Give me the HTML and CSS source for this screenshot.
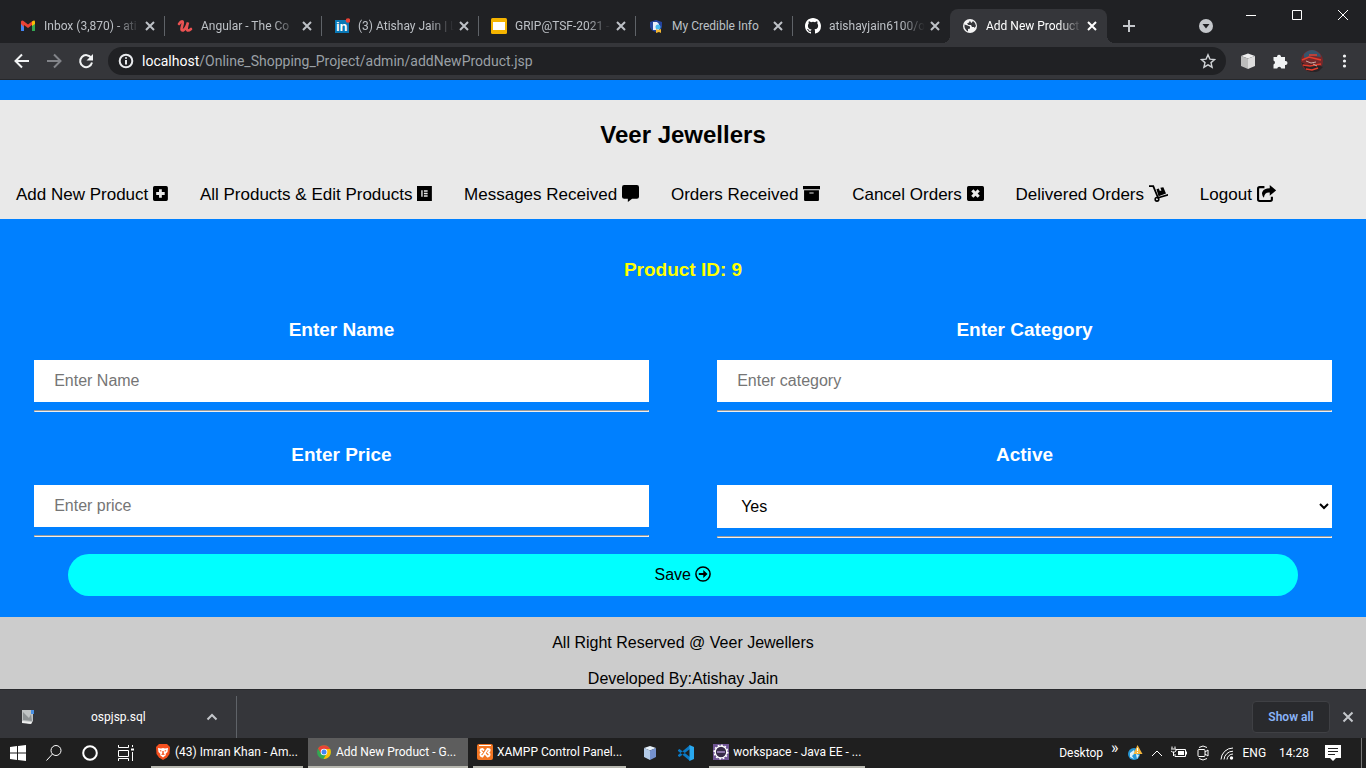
FILE: index.html
```html
<!DOCTYPE html>
<html lang="en">
<head>
<meta charset="utf-8">
<title>Add New Product</title>
<link rel="stylesheet" href="styles.css">
</head>
<body>
<div class="screen">
  <div class="tabstrip">
    <div class="tab">
      <svg class="icon" viewBox="0 0 16 16"><path fill="#4285f4" d="M1 4v8.500q0 .5.500.5H4V6z"/><path fill="#34a853" d="M15 4v8.500q0 .5-.5.500H12V6z"/><path fill="#ea4335" d="M1 4.500V3.500Q2 2 3.500 3L8 6.500 12.500 3v3.500L8 10 4 7v2L1 6z"/><path fill="#fbbc04" d="M12 3.500Q15 1.500 15 4v2l-3 2z"/></svg>
      <span class="title fade">Inbox (3,870) - ati</span>
      <button class="close" aria-label="Close tab"><svg viewBox="0 0 16 16"><path d="M4 4l8 8M12 4l-8 8"/></svg></button>
    </div>
    <div class="tab">
      <svg class="icon" viewBox="0 0 16 16"><path fill="none" stroke="#eb5252" stroke-width="2.600" stroke-linecap="round" d="M2 6Q4 3 5.500 3.500 6.500 4 5 8.500 3.500 13 6 12.500 9 11 11 4.500 9 11.500 10.500 12.500 12 12.800 14 11"/></svg>
      <span class="title fade">Angular - The Co</span>
      <button class="close" aria-label="Close tab"><svg viewBox="0 0 16 16"><path d="M4 4l8 8M12 4l-8 8"/></svg></button>
    </div>
    <div class="tab">
      <svg class="icon" viewBox="0 0 16 16"><path fill="#0a77b5" d="M1 2h14v13H1z"/><text x="2" y="13" class="in">in</text><circle cx="14" cy="2.500" r="2.300" fill="#e94235"/></svg>
      <span class="title fade">(3) Atishay Jain | L</span>
      <button class="close" aria-label="Close tab"><svg viewBox="0 0 16 16"><path d="M4 4l8 8M12 4l-8 8"/></svg></button>
    </div>
    <div class="tab">
      <svg class="icon" viewBox="0 0 16 16"><rect width="16" height="16" rx="1.500" fill="#f5b400"/><path fill="#fff" d="M2 4h12v8H2z"/></svg>
      <span class="title fade">GRIP@TSF-2021 -</span>
      <button class="close" aria-label="Close tab"><svg viewBox="0 0 16 16"><path d="M4 4l8 8M12 4l-8 8"/></svg></button>
    </div>
    <div class="tab">
      <svg class="icon" viewBox="0 0 16 16"><path fill="#24439c" d="M8 2l6 2v5q-1 4-6 5-5-1-6-5V4z"/><path fill="#e8eefb" d="M5 4h4l2 2v6H5z"/><circle cx="10" cy="9" r="2.500" fill="#49b8ef"/><path fill="#f2b632" d="M8 11l2 1 3-1v4l-2-1-3 1z"/></svg>
      <span class="title">My Credible Info</span>
      <button class="close" aria-label="Close tab"><svg viewBox="0 0 16 16"><path d="M4 4l8 8M12 4l-8 8"/></svg></button>
    </div>
    <div class="tab last">
      <svg class="icon" viewBox="0 0 16 16"><path fill="#fff" d="M8 0C3.580 0 0 3.580 0 8c0 3.540 2.290 6.530 5.470 7.590.4.070.55-.17.55-.38 0-.19-.01-.82-.01-1.490-2.010.37-2.530-.49-2.690-.94-.09-.23-.48-.94-.82-1.130-.28-.15-.68-.52-.01-.53.63-.01 1.080.58 1.230.82.72 1.210 1.870.87 2.330.66.070-.52.28-.87.51-1.070-1.780-.2-3.640-.89-3.640-3.950 0-.87.31-1.590.82-2.150-.08-.2-.36-1.020.08-2.120 0 0 .67-.21 2.200.82a7.600 7.600 0 0 1 4 0c1.530-1.040 2.200-.82 2.200-.82.44 1.100.16 1.920.08 2.120.51.560.82 1.270.82 2.150 0 3.070-1.870 3.750-3.650 3.950.29.25.54.73.54 1.480 0 1.070-.01 1.930-.01 2.200 0 .21.15.46.55.38A8 8 0 0 0 16 8c0-4.420-3.580-8-8-8z"/></svg>
      <span class="title fade">atishayjain6100/o</span>
      <button class="close" aria-label="Close tab"><svg viewBox="0 0 16 16"><path d="M4 4l8 8M12 4l-8 8"/></svg></button>
    </div>
    <div class="tab active">
      <svg class="icon" viewBox="0 0 16 16"><circle cx="8" cy="8" r="7" fill="#f4f4f4"/><path fill="#35363a" d="M2.500 6.500l3 1 2.500 1v2l-2 .5v2.500Q2 11 2.500 6.500zM8 2.500l-1 2-2 1 1.500 1.500H9l1 2h2l.5 1L14 8Q13.500 4.500 11 3L9.500 5 8.500 4z"/></svg>
      <span class="title fade">Add New Product</span>
      <button class="close" aria-label="Close tab"><svg viewBox="0 0 16 16"><path d="M4 4l8 8M12 4l-8 8"/></svg></button>
    </div>
    <button class="strip-btn" aria-label="New tab"><svg viewBox="0 0 16 16"><path d="M8 2v12M2 8h12"/></svg></button>
    <button class="strip-btn search-tabs" aria-label="Search tabs"><svg viewBox="0 0 16 16"><circle cx="8" cy="8" r="7" fill="#c4c7cb" stroke="none"/><path fill="#202124" stroke="none" d="M4.500 6h7L8 10.500z"/></svg></button>
    <div class="window-btns">
      <button aria-label="Minimize"><svg viewBox="0 0 12 12"><path d="M1 6.500h10"/></svg></button>
      <button aria-label="Maximize"><svg viewBox="0 0 12 12"><path d="M1.500 1.500h9v9h-9z"/></svg></button>
      <button aria-label="Close"><svg viewBox="0 0 12 12"><path d="M1 1l10 10M11 1L1 11"/></svg></button>
    </div>
  </div>

  <div class="toolbar">
    <button class="tool" aria-label="Back"><svg viewBox="0 0 16 16"><path d="M15 8H2M8 1.500L1.500 8 8 14.500"/></svg></button>
    <button class="tool dim" aria-label="Forward"><svg viewBox="0 0 16 16"><path d="M1 8h13M8 1.500L14.500 8 8 14.500"/></svg></button>
    <button class="tool" aria-label="Reload"><svg viewBox="0 0 16 16"><path d="M13.300 5A6 6 0 1 0 14 9.500"/><path fill="#f1f3f4" stroke="none" d="M15 1v6.500H8.500z"/></svg></button>
    <div class="address">
      <svg class="icon info" viewBox="0 0 16 16"><circle cx="8" cy="8" r="6.300"/><path d="M8 7v4.500M8 4.300v1.500"/></svg>
      <span class="url"><b>localhost</b>/Online_Shopping_Project/admin/addNewProduct.jsp</span>
      <button class="star" aria-label="Bookmark this tab"><svg viewBox="0 0 16 16"><path d="M8 1.800l1.900 4.300 4.700.4-3.600 3.100 1.100 4.600L8 11.800l-4.100 2.400L5 9.600 1.400 6.500l4.700-.4z"/></svg></button>
    </div>
    <button class="tool" aria-label="Extension"><svg viewBox="0 0 16 16"><g stroke="none"><path fill="#eee" d="M1 3l7-2.500L15 3 8 5.500z"/><path fill="#bcbcbc" d="M1 3l7 2.500V16l-7-3z"/><path fill="#ddd" d="M8 5.500L15 3v10l-7 3z"/></g></svg></button>
    <button class="tool" aria-label="Extensions"><svg viewBox="0 0 16 16"><path fill="#f1f3f4" stroke="none" d="M1.500 4H5a2 2 0 0 1 4-.5V4h4v4h.500a2 2 0 0 1 0 4H13v3.500H9.300a2.100 2.100 0 0 0-4.100 0H1.500v-4a2.100 2.100 0 0 0 0-4z"/></svg></button>
    <button class="tool avatar" aria-label="Profile"><svg viewBox="0 0 22 22"><g stroke="none"><circle cx="11" cy="11" r="11" fill="#76282a"/><path fill="#35546b" d="M3 4Q11-4 19 4l1 3-8-1-9 2z"/><path fill="#292326" d="M0 12l6 3 8-1 8 3-4 4q-7 3-13-1z"/></g><path stroke="#e53c2c" stroke-width="1.500" d="M1 10l7-3 12 3M2 15l7 1 11-2M5 19l6 1 6-2M8 5h8"/><path stroke="#c9aaa4" stroke-width="1" d="M5 11l5 2 5-1M12 14l4 2"/></svg></button>
    <button class="tool" aria-label="Menu"><svg viewBox="0 0 16 16"><g fill="#f1f3f4" stroke="none"><circle cx="8.500" cy="3" r="1.600"/><circle cx="8.500" cy="8" r="1.600"/><circle cx="8.500" cy="13" r="1.600"/></g></svg></button>
  </div>

  <div class="page">
    <header class="site-header">
      <h2>Veer Jewellers</h2>
      <nav>
        <a href="#">Add New Product <svg viewBox="0 0 14 16"><path fill-rule="evenodd" d="M1.500 1h11Q14 1 14 2.500v11q0 1.500-1.500 1.500h-11Q0 15 0 13.500v-11Q0 1 1.500 1zM5.700 4v2.700H3v2.600h2.700V12h2.600V9.300H11V6.700H8.300V4z"/></svg></a>
        <a href="#">All Products &amp; Edit Products <svg viewBox="0 0 14 16"><path fill-rule="evenodd" d="M0 1h14v14H0zM4 5v6h1.300V5zM6.500 5v1.300H10V5zm0 2.400v1.200H10V7.400zm0 2.300V11H10V9.700z"/></svg></a>
        <a href="#">Messages Received <svg viewBox="0 0 16 16"><path d="M2 0h12q2 0 2 2v9q0 2-2 2H9.500L5.500 16v-3H2q-2 0-2-2V2q0-2 2-2z"/></svg></a>
        <a href="#">Orders Received <svg viewBox="0 0 16 16"><path fill-rule="evenodd" d="M0 1h16v3H0zM1 5h14v9q0 1-1 1H2q-1 0-1-1zm5 2v1h4V7z"/></svg></a>
        <a href="#">Cancel Orders <svg viewBox="0 0 16 16"><path fill-rule="evenodd" d="M1.500 1h13Q16 1 16 2.500v11q0 1.500-1.500 1.500h-13Q0 15 0 13.500v-11Q0 1 1.500 1zM6 4L4 6l2 2-2 2 2 2 2-2 2 2 2-2-2-2 2-2-2-2-2 2z"/></svg></a>
        <a href="#">Delivered Orders <svg class="wide" viewBox="0 0 18 16"><path fill="none" stroke="#000" stroke-width="1.700" d="M0 1h4l4.500 11L18 9.200"/><circle cx="7.500" cy="13.500" r="1.700" fill="none" stroke="#000" stroke-width="1.500"/><path d="M7 4l2.200-.8 1 2.500 1.500-.6-1-2.500L13.500 2l2.500 6-7 2.500z"/></svg></a>
        <a href="#">Logout <svg class="wide" viewBox="0 0 18 16"><path fill="none" stroke="#000" stroke-width="2" d="M7 2H2.500Q1 2 1 3.500v10Q1 15 2.500 15h10q1.500 0 1.500-1.500V11"/><path d="M12 0l6 5-6 5V7Q7 6.500 6.500 12 4 9 5 6.500 6.500 3 12 3z"/></svg></a>
      </nav>
    </header>

    <form class="product-form">
      <h3 class="product-id">Product ID: 9</h3>
      <div class="fields">
        <div class="field">
          <h3><label for="name">Enter Name</label></h3>
          <input id="name" type="text" placeholder="Enter Name">
          <hr>
        </div>
        <div class="field">
          <h3><label for="category">Enter Category</label></h3>
          <input id="category" type="text" placeholder="Enter category">
          <hr>
        </div>
        <div class="field">
          <h3><label for="price">Enter Price</label></h3>
          <input id="price" type="text" placeholder="Enter price">
          <hr>
        </div>
        <div class="field">
          <h3><label for="active">Active</label></h3>
          <select id="active"><option>Yes</option><option>No</option></select>
          <hr>
        </div>
      </div>
      <button class="save" type="button">Save <svg viewBox="0 0 16 16"><circle cx="8" cy="8" r="7.100" fill="none" stroke="#000" stroke-width="1.500"/><path d="M3.800 7h4.500V4L12.500 8l-4.200 4V9H3.800z"/></svg></button>
    </form>

    <footer class="site-footer">
      <p>All Right Reserved @ Veer Jewellers</p>
      <p>Developed By:Atishay Jain</p>
    </footer>
  </div>

  <div class="downloads">
    <div class="download">
      <svg class="icon" viewBox="0 0 16 16"><path fill="#bfc3c4" d="M2 1h11v11l-2 3-9-2z"/><path fill="#8c9193" d="M3 3l6 6 2-4 1 7-9-1z"/><path fill="#eee" d="M2 12l10 1-1 2-9-1z"/><path fill="#4a90e2" d="M11 1h3v4h-3z"/></svg>
      <span class="file">ospjsp.sql</span>
      <button class="plain" aria-label="Download options"><svg viewBox="0 0 16 16"><path d="M3.500 10.500L8 6l4.500 4.500"/></svg></button>
    </div>
    <button class="show-all">Show all</button>
    <button class="plain dismiss" aria-label="Close downloads bar"><svg viewBox="0 0 16 16"><path d="M3.500 3.500l9 9M12.500 3.500l-9 9"/></svg></button>
  </div>

  <div class="taskbar">
    <button class="sys" aria-label="Start"><svg viewBox="0 0 16 16"><path fill="#fff" d="M0 2l7-1v6.500H0zM8 1l8-1v7.500H8zM0 8.500h7V15l-7-1zM8 8.500h8V16l-8-1z"/></svg></button>
    <button class="sys" aria-label="Search"><svg class="line" viewBox="0 0 16 16"><circle cx="10" cy="5.500" r="5"/><path d="M6.500 9L.5 15.500"/></svg></button>
    <button class="sys" aria-label="Cortana"><svg class="line" viewBox="0 0 16 16"><circle cx="8" cy="8" r="6.800" stroke-width="2"/></svg></button>
    <button class="sys" aria-label="Task view"><svg class="line" viewBox="0 0 16 16"><path d="M.5 0v2.500h10V0M.5 5.500h10v6H.5zM.5 16v-2.500h10V16M14.500 0v2M14.500 7v9"/><path d="M13 4.500h3" stroke-width="2"/></svg></button>
    <button class="task first">
      <svg class="icon" viewBox="0 0 16 16"><path fill="#f5501f" d="M4 0h8l3 3-.5 7L12 13.500 8 16l-4-2.500L1.500 10 1 3z"/><path fill="#fff" d="M3 4l3 .5L8 4l2 .5L13 4l-.5 4-2 2 .5 1-3 2.500L5 11l.5-1-2-2z"/><path fill="#f5501f" d="M4.500 6l2 .5L6 8zM11.500 6l-2 .5.5 1.500zM7.300 7h1.400v2.500l1.300 1-2 .5-2-.5 1.300-1z"/></svg>
      <span>(43) Imran Khan - Am...</span>
    </button>
    <button class="task current">
      <svg class="icon" viewBox="0 0 16 16"><circle cx="8" cy="8" r="7" fill="#33a852"/><path fill="#ea4335" d="M2 4.500A7 7 0 0 1 14.200 5H8L4.800 9z"/><path fill="#fbbc04" d="M14.200 5A7 7 0 0 1 7.500 15L11 9 9 5z"/><circle cx="8" cy="8" r="3.300" fill="#fff"/><circle cx="8" cy="8" r="2.500" fill="#4285f4"/></svg>
      <span>Add New Product - G...</span>
    </button>
    <button class="task">
      <svg class="icon" viewBox="0 0 16 16"><rect width="16" height="16" rx="2" fill="#f37623"/><path stroke="#fff" d="M2 1.500h12"/><path fill="none" stroke="#fff" stroke-width="1.800" d="M7 6.500L5.500 5Q3 5 3.500 7L5 8.500 3.500 10q-.5 2 2 2.500L10.500 5q3 0 2 2L11 8.500l1.500 1.500q.5 2-2 2.500L7.500 9"/></svg>
      <span>XAMPP Control Panel...</span>
    </button>
    <button class="sys app" aria-label="NetBeans"><svg viewBox="0 0 16 16"><path fill="#e8f2fb" d="M2 3l6-2 6 2-6 2.500z"/><path fill="#b4cbe9" d="M2 3l6 2.500V15l-6-3z"/><path fill="#7592cf" d="M8 5.500L14 3v9l-6 3z"/></svg></button>
    <button class="sys" aria-label="Visual Studio Code"><svg viewBox="0 0 16 16"><path fill="#0b79c4" d="M0 5l1.500-1L12 12v4L0 6zM0 11l1.500 1L12 4V0L0 10z"/><path fill="#29a9f0" d="M11.500 0L16 2v12l-4.500 2z"/></svg></button>
    <button class="task">
      <svg class="icon" viewBox="0 0 16 16"><path fill="#6f5494" d="M0 0h16v16H0z"/><circle cx="8" cy="8" r="5.800" fill="#372b48" stroke="#fff" stroke-width="1.300"/><circle cx="8" cy="8" r="6.700" fill="none" stroke="#fff" stroke-width="1.600" stroke-dasharray="1.700 1.800"/><path stroke="#8a74a6" stroke-width="2" d="M4 8h8"/></svg>
      <span>workspace - Java EE - ...</span>
    </button>
    <div class="tray">
      <span>Desktop</span>
      <span class="more">»</span>
      <svg viewBox="0 0 16 16"><circle cx="7" cy="9" r="6" fill="#2797d4"/><path fill="#d9f1fb" d="M3 8l4-3 1 3-3 3 2 3-4-2zM9 9l3 1-2 4z"/><path fill="#f6b73c" d="M10.500 0l5 9h-9z"/><path stroke="#fff" d="M10.500 3v3M10.500 7v1"/></svg>
      <svg class="line narrow" viewBox="0 0 12 12"><path d="M1 9l5-5 5 5"/></svg>
      <svg class="line" viewBox="0 0 16 16"><path d="M5 4.500h9.500v7H4V9M15.500 6.500v3M1 1.500v2M4 1.500v2M0 4h5v2L3.500 7h-2L0 6M2.500 7v4"/><path fill="#fff" stroke="none" d="M7 6h6v4H7z"/></svg>
      <svg class="line" viewBox="0 0 16 16"><rect x="3" y="4.500" width="7" height="7" rx="1"/><path d="M10 7l3-2v6l-3-2M4 2.500q4-3 8 0M4 13.500q4 3 8 0"/></svg>
      <svg class="line" viewBox="0 0 16 16"><path d="M2 14.500A12 12 0 0 1 14 3M5 14.500A9 9 0 0 1 14 6.200M8 14.500A6 6 0 0 1 14 9"/><circle cx="12.500" cy="13" r="1.700" fill="#fff" stroke="none"/></svg>
      <span>ENG</span>
      <span class="clock">14:28</span>
      <svg viewBox="0 0 16 16"><path fill="#fff" d="M0 0h16v13h-5l-3 3-3-3H0z"/><path stroke="#222" d="M3 3.500h10M3 6.500h10M3 9.500h7"/></svg>
    </div>
  </div>
</div>
</body>
</html>
```
FILE: styles.css
```css
* {
  box-sizing: border-box;
}

body {
  margin: 0;
  font-family: "Liberation Sans", Arial, sans-serif;
}

button {
  border: 0;
  padding: 0;
  background: none;
  color: inherit;
  font: inherit;
}

.screen {
  display: flex;
  flex-direction: column;
  height: 100vh;
  overflow: hidden;
}

.icon {
  width: 16px;
  height: 16px;
  flex: none;
}

/* Browser tabs */
.tabstrip,
.toolbar,
.downloads,
.taskbar {
  flex: none;
  display: flex;
  align-items: center;
  font-family: Roboto, "Open Sans", sans-serif;
  font-size: 12px;
  white-space: nowrap;
}

.tabstrip {
  height: 43px;
  padding: 9px 0 0 8px;
  background: #202124;
  color: #bdc1c6;
}

.tab {
  display: flex;
  align-items: center;
  flex: 0 1 157px;
  min-width: 0;
  height: 34px;
  padding: 0 7px 0 12px;
  background: linear-gradient(#5f6368, #5f6368) right center / 1px 20px no-repeat;
}

.tab.last {
  background: none;
}

.tab.active {
  position: relative;
  background: #35363a;
  border-radius: 8px 8px 0 0;
  color: #fff;
}

.tab.active::before,
.tab.active::after {
  content: "";
  position: absolute;
  bottom: 0;
  width: 8px;
  height: 8px;
}

.tab.active::before {
  right: 100%;
  background: radial-gradient(circle at 0 0, #202124 8px, #35363a 8px);
}

.tab.active::after {
  left: 100%;
  background: radial-gradient(circle at 100% 0, #202124 8px, #35363a 8px);
}

.title {
  flex: 1;
  min-width: 0;
  margin: 0 2px 0 8px;
}

.title.fade {
  -webkit-mask-image: linear-gradient(90deg, #000 75%, transparent);
  mask-image: linear-gradient(90deg, #000 75%, transparent);
}

.in {
  font: bold 13px "Liberation Sans", sans-serif;
  fill: #fff;
}

.close,
.close svg {
  display: block;
  width: 16px;
  height: 16px;
  fill: none;
  stroke: currentColor;
  stroke-width: 2;
}

.strip-btn {
  display: flex;
  justify-content: center;
  width: 28px;
  margin: 0 8px;
  flex: none;
}

.strip-btn svg {
  width: 16px;
  height: 16px;
  stroke: #c4c7cb;
  stroke-width: 2;
}

.search-tabs {
  margin-left: auto;
}

.window-btns {
  display: flex;
  align-self: flex-start;
}

.window-btns button {
  display: flex;
  justify-content: center;
  width: 46px;
}

.window-btns svg {
  width: 12px;
  height: 12px;
  fill: none;
  stroke: #fff;
}

/* Address row */
.toolbar {
  height: 37px;
  padding: 4px 6px;
  background: #35363a;
  border-bottom: 1px solid #26272a;
}

.tool {
  display: flex;
  justify-content: center;
  width: 32px;
  flex: none;
}

.tool svg,
.star svg {
  width: 16px;
  height: 16px;
  fill: none;
  stroke: #f1f3f4;
  stroke-width: 2;
}

.tool.dim svg {
  stroke: #828489;
}

.tool.avatar svg {
  width: 22px;
  height: 22px;
}

.address {
  flex: 1;
  display: flex;
  align-items: center;
  gap: 8px;
  height: 28px;
  margin: 0 6px;
  padding: 0 10px;
  border-radius: 14px;
  background: #202124;
}

.info {
  fill: none;
  stroke: #e8eaed;
  stroke-width: 2;
}

.url {
  flex: 1;
  color: #9aa0a6;
  font-size: 14px;
}

.url b {
  color: #fff;
  font-weight: 400;
}

.star {
  display: flex;
}

.star svg {
  stroke: #d0d3d6;
  stroke-width: 1.4;
}

/* Store admin page */
.page {
  flex: 1;
  min-height: 0;
  overflow: hidden;
  padding-top: 20px;
  background: #0080ff;
}

.site-header {
  background: #e9e9e9;
}

.site-header h2 {
  margin: 0;
  padding: 21px 0 19px;
  font-size: 24px;
  line-height: 28px;
  text-align: center;
}

.site-header nav {
  display: flex;
}

.site-header a {
  padding: 17px 16px 15px;
  color: #000;
  font-size: 17px;
  line-height: 19px;
  text-decoration: none;
  white-space: nowrap;
}

.site-header a svg {
  height: 17px;
  vertical-align: -2px;
}

.product-form {
  padding: 21px 0;
  text-align: center;
}

.product-form h3 {
  margin: 0;
  padding: 20px 0;
  color: #fff;
  font-size: 19px;
  line-height: 20px;
}

.product-form .product-id {
  color: #ff0;
}

.fields {
  display: grid;
  grid-template-columns: 1fr 1fr;
  margin-bottom: 3px;
}

.field {
  padding: 0 5% 5px;
}

.field input,
.field select {
  display: block;
  width: 100%;
  height: 42px;
  padding: 10px 20px;
  border: 0;
  border-radius: 0;
  background-color: #fff;
  color: #000;
  font: 16px "Liberation Sans", Arial, sans-serif;
}

.field input::placeholder {
  color: #757575;
}

.field select {
  height: 43px;
}

.field hr {
  margin: 8px 0;
}

.save {
  display: block;
  width: 90%;
  height: 42px;
  margin: 0 auto;
  border-radius: 25px;
  background: #0ff;
  color: #000;
  font-size: 16px;
}

.save svg {
  width: 16px;
  height: 16px;
  vertical-align: -2px;
}

.site-footer {
  padding: 17px 0;
  background: #ccc;
  text-align: center;
  line-height: 18px;
}

.site-footer p {
  margin: 0 0 18px;
}

/* Downloads bar */
.downloads {
  height: 49px;
  padding-right: 10px;
  background: #35363a;
  border-top: 1px solid #292a2d;
}

.download {
  display: flex;
  align-items: center;
  align-self: flex-end;
  width: 237px;
  height: 42px;
  padding: 0 16px 0 20px;
  border-right: 1px solid #5f6368;
  color: #fff;
}

.file {
  flex: 1;
  padding-left: 55px;
}

.plain {
  display: flex;
}

.plain svg {
  width: 16px;
  height: 16px;
  fill: none;
  stroke: #c4c7cb;
  stroke-width: 2;
}

.dismiss {
  margin-top: 6px;
}

.show-all {
  width: 78px;
  height: 32px;
  margin: 6px 10px 0 auto;
  border: 1px solid #3f4044;
  border-radius: 4px;
  background: #292a2d;
  color: #8ab4f8;
  font-weight: 600;
}

/* Taskbar */
.taskbar {
  height: 30px;
  background: #1f1f1f;
  color: #fff;
}

.sys {
  display: flex;
  justify-content: center;
  width: 36px;
  flex: none;
}

.sys svg {
  width: 16px;
  height: 16px;
}

.sys.app {
  margin-left: 1px;
}

.line {
  fill: none;
  stroke: #fff;
}

.task {
  display: flex;
  align-items: center;
  gap: 4px;
  flex: 0 1 152px;
  height: 30px;
  margin: 0 5px;
  padding: 0 4px;
  border-bottom: 2px solid #b8b8b0;
}

.task.first {
  margin-left: 7px;
}

.task + .task {
  margin-left: 0;
}

.task.current {
  flex-basis: 160px;
  padding: 0 8px;
  background: #5d5d5d;
}

.tray {
  display: flex;
  align-items: center;
  gap: 8px;
  height: 30px;
  margin-left: auto;
  margin-right: 4px;
  padding-right: 20px;
  border-right: 1px solid #777;
}

.tray svg {
  width: 16px;
  height: 16px;
}

.tray .narrow {
  width: 12px;
  height: 12px;
}

.more {
  align-self: flex-start;
  font-size: 16px;
  line-height: 20px;
}

.clock {
  margin: 0 8px 0 5px;
}
```
